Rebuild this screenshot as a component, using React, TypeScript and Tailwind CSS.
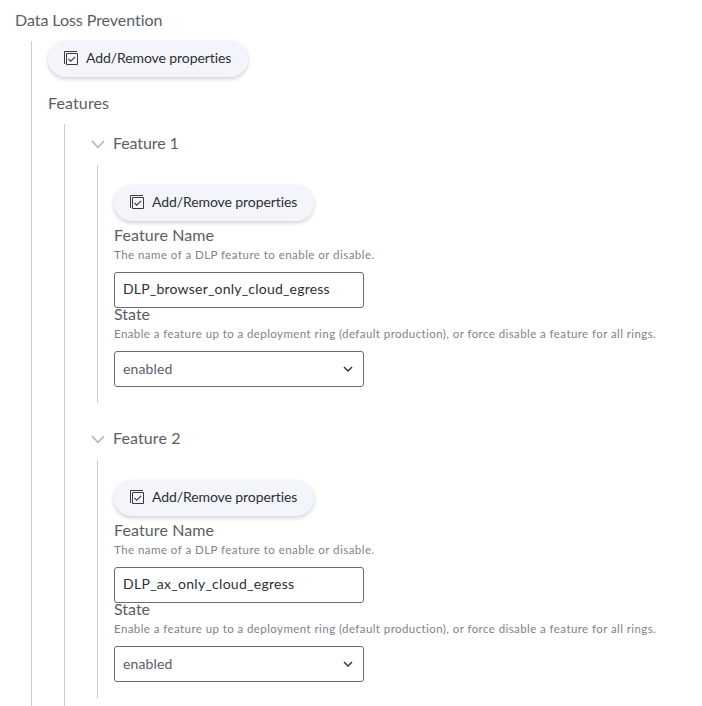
const CheckIcon = () => (
  <svg width="15" height="15" viewBox="0 0 15 15" fill="none" stroke="#383a42" className="mb-px shrink-0">
    <path d="M.5 13V.5H13" />
    <path d="M2.5 2.5h11v11h-11z" />
    <path d="M4.4 7.9l2.3 2.3 4.4-4.4" strokeWidth="1.1" />
  </svg>
);

const PropertiesButton = () => (
  <button className="flex h-9 w-50 items-center rounded-full bg-[#f4f5fa] pl-4 text-[#2d2f36] shadow-[0_2px_4px_rgba(0,0,0,0.18)]">
    <CheckIcon />
    <span className="ml-[7px] pb-0.5 text-sm tracking-[-0.09px] whitespace-nowrap">Add/Remove properties</span>
  </button>
);

const Chevron = () => (
  <svg width="14" height="9" viewBox="0 0 14 9" fill="none" stroke="#b3b5bc" strokeWidth="1.7" className="shrink-0">
    <path d="M1 1l6 6.3L13 1" />
  </svg>
);

type FeatureProps = { title: string; titleClass: string; name: string; nameClass: string };

const Feature = ({ title, titleClass, name, nameClass }: FeatureProps) => (
  <section>
    <h3 className="ml-[26px] flex h-6 items-center gap-2">
      <Chevron />
      <span className={`pb-0.5 ${titleClass}`}>{title}</span>
    </h3>
    <div className="mt-[9px] ml-8 h-[238px] border-l border-[#cfcfd3] pt-5 pl-4">
      <PropertiesButton />
      <div className="mt-0.5 h-[25px] leading-6 tracking-[0.1px]">Feature Name</div>
      <p className="mb-2.5 h-3.5 text-[11.5px] leading-3.5 tracking-[0.46px] whitespace-nowrap text-[#80828b]">
        The name of a DLP feature to enable or disable.
      </p>
      <div className="flex h-9 w-[250px] items-center rounded-[3px] border border-[#696c77] px-2 text-sm text-[#2d2f36]">
        <span className={`pb-0.5 ${nameClass}`}>{name}</span>
      </div>
      <div className="h-[19px] leading-3">State</div>
      <p className="mb-2.5 h-3.5 text-[11.5px] leading-3.5 tracking-[0.42px] whitespace-nowrap text-[#80828b]">
        Enable a feature up to a deployment ring (default production), or force disable a feature for all rings.
      </p>
      <div className="flex h-9 w-[250px] items-center justify-between rounded-[3px] border border-[#696c77] pr-2.5 pl-2 text-sm">
        <span className="tracking-[0.15px]">enabled</span>
        <svg width="10" height="7" viewBox="0 0 10 7" fill="none" stroke="#2d2f36" strokeWidth="1.4">
          <path d="M1 1l4 4 4-4" />
        </svg>
      </div>
    </div>
  </section>
);

export default function App() {
  return (
    <main className="flex h-[706px] w-[702px] flex-col overflow-hidden bg-white font-['Lato','Noto_Sans',sans-serif] text-base text-[#5b5d66] [font-variant-ligatures:none]">
      <h1 className="h-[41px] pl-[15px] leading-[39px] tracking-[-0.05px]">Data Loss Prevention</h1>
      <div className="ml-[31px] flex grow flex-col border-l border-[#cfcfd3] pl-4">
        <PropertiesButton />
        <h2 className="mt-3.5 mb-[9px] h-6 leading-6 tracking-[0.12px]">Features</h2>
        <div className="ml-4 flex grow flex-col gap-6 border-l border-[#cfcfd3] pt-2">
          <Feature
            title="Feature 1"
            titleClass="tracking-[-0.1px]"
            name="DLP_browser_only_cloud_egress"
            nameClass="tracking-[0.21px]"
          />
          <Feature
            title="Feature 2"
            titleClass="tracking-[0.1px]"
            name="DLP_ax_only_cloud_egress"
            nameClass="tracking-[0.28px]"
          />
        </div>
      </div>
    </main>
  );
}
